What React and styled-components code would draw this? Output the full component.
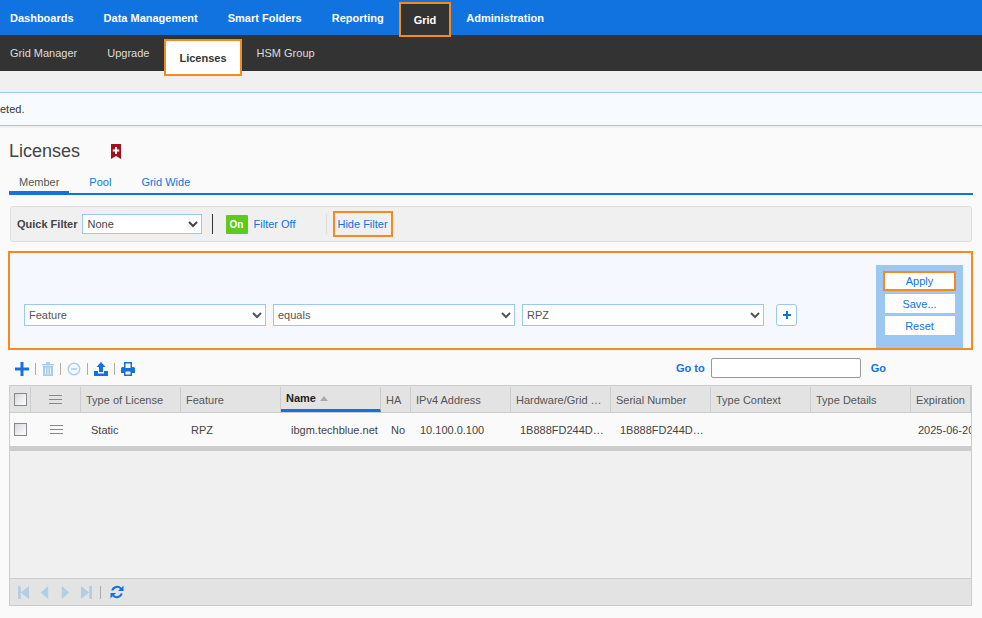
import styled, { createGlobalStyle } from "styled-components";

const GlobalStyle = createGlobalStyle`
  html, body {
    margin: 0;
    padding: 0;
    height: 618px;
    overflow: hidden;
    background: #fafafa;
    font-family: "Liberation Sans", Arial, sans-serif;
    font-size: 11px;
    color: #444;
  }
  * { box-sizing: border-box; }
`;

const topItems = ["Dashboards", "Data Management", "Smart Folders", "Reporting", "Grid", "Administration"];
const subItems = ["Grid Manager", "Upgrade", "Licenses", "HSM Group"];
const columns = ["Type of License", "Feature", "Name", "HA", "IPv4 Address", "Hardware/Grid …", "Serial Number", "Type Context", "Type Details", "Expiration"];
const cells = [
  { text: "Static", pad: 10 },
  { text: "RPZ", pad: 10 },
  { text: "ibgm.techblue.net", pad: 10 },
  { text: "No", pad: 10 },
  { text: "10.100.0.100", pad: 9 },
  { text: "1B888FD244D…", pad: 9 },
  { text: "1B888FD244D…", pad: 9 },
  { text: "", pad: 9 },
  { text: "", pad: 9 },
  { text: "2025-06-20", pad: 7 },
];

const gridCols = "21px 50px 100px 100px 100px 30px 100px 100px 100px 100px 100px 1fr";

function Caret({ dir }) {
  return (
    <PagerSvg viewBox="0 0 12 16">
      {dir === "first" && <path d="M0 1h3v14H0zM3 8l9-7v14z" />}
      {dir === "prev" && <path d="M2 8l8-7v14z" />}
      {dir === "next" && <path d="M10 8L2 1v14z" />}
      {dir === "last" && <path d="M12 1H9v14h3zM9 8L0 1v14z" />}
    </PagerSvg>
  );
}

function App() {
  return (
    <Page>
      <GlobalStyle />
      <TopNav>
        {topItems.map((t) => (
          <TopItem key={t} $active={t === "Grid"}>{t}</TopItem>
        ))}
      </TopNav>
      <SubNav>
        {subItems.map((t) => (
          <SubItem key={t} $active={t === "Licenses"}>{t}</SubItem>
        ))}
      </SubNav>
      <NoticeArea>
        <Notice>eted.</Notice>
      </NoticeArea>

      <Content>
        <TitleRow>
          <Title>Licenses</Title>
          <svg width="10" height="15" viewBox="0 0 10 15">
            <path d="M0 0h10v15l-5-3-5 3z" fill="#a5101f" />
            <path d="M4 3h2v2.5h2.2v2H6V10H4V7.5H1.8v-2H4z" fill="#fff" />
          </svg>
        </TitleRow>
        <Tabs>
          <Tab $active>Member</Tab>
          <Tab>Pool</Tab>
          <Tab>Grid Wide</Tab>
        </Tabs>

        <FilterBar>
          <QuickLabel>Quick Filter</QuickLabel>
          <QuickSelect defaultValue="None">
            <option>None</option>
          </QuickSelect>
          <DarkDivider />
          <OnBadge>On</OnBadge>
          <FilterLink>Filter Off</FilterLink>
          <LightDivider />
          <HideFilter>Hide Filter</HideFilter>
        </FilterBar>

        <FilterPanel>
          <Rule>
            <RuleSelect defaultValue="Feature"><option>Feature</option></RuleSelect>
            <RuleSelect defaultValue="equals"><option>equals</option></RuleSelect>
            <RuleSelect defaultValue="RPZ"><option>RPZ</option></RuleSelect>
            <AddRule>
              <svg width="10" height="10" viewBox="0 0 10 10">
                <path d="M4 1h2v3h3v2H6v3H4V6H1V4h3z" fill="#1173e0" />
              </svg>
            </AddRule>
          </Rule>
          <ActionPanel>
            <ActionButton $focus>Apply</ActionButton>
            <ActionButton>Save...</ActionButton>
            <ActionButton>Reset</ActionButton>
          </ActionPanel>
        </FilterPanel>

        <Toolbar>
          <Tools>
            <svg width="14" height="14" viewBox="0 0 14 14">
              <path d="M5.5 0h3v5.5H14v3H8.500V14h-3V8.500H0v-3h5.500z" fill="#1173e0" />
            </svg>
            <ToolSep />
            <svg width="12" height="14" viewBox="0 0 12 14">
              <path d="M0 2h12v1.500H0zM4 0h4v2H4zM1 4h10v10H1z" fill="#a9cdf0" />
              <path d="M3 5.500h1v7H3zM5.500 5.500h1v7h-1zM8 5.500h1v7H8z" fill="#e6f0fa" />
            </svg>
            <ToolSep />
            <svg width="14" height="14" viewBox="0 0 14 14">
              <circle cx="7" cy="7" r="5.800" fill="none" stroke="#a9cdf0" strokeWidth="1.400" />
              <path d="M4 6.200h6v1.600H4z" fill="#a9cdf0" />
            </svg>
            <ToolSep />
            <svg width="14" height="14" viewBox="0 0 14 14">
              <path d="M7 0l4.500 5H9v5H5V5H2.500z" fill="#1173e0" />
              <path d="M0 9h4v2.500h6V9h4v5H0z" fill="#1173e0" />
            </svg>
            <ToolSep />
            <svg width="14" height="14" viewBox="0 0 14 14">
              <path fillRule="evenodd" d="M3 0h8v5h1.500A1.500 1.500 0 0 1 14 6.500V11h-3v3H3v-3H0V6.500A1.500 1.500 0 0 1 1.500 5H3zM4.500 1.500V6h5V1.500zM4.500 9.500v3h5v-3z" fill="#1173e0" />
            </svg>
          </Tools>
          <GoTo>
            <GoLabel>Go to</GoLabel>
            <GoInput />
            <GoLabel>Go</GoLabel>
          </GoTo>
        </Toolbar>

        <Table>
          <HeadRow>
            <HeadCell $center><Check /></HeadCell>
            <HeadCell $center><Menu /></HeadCell>
            {columns.map((c) => (
              <HeadCell key={c} $sorted={c === "Name"}>
                {c}
                {c === "Name" && (
                  <svg width="8" height="5" viewBox="0 0 8 5">
                    <path d="M4 0l4 5H0z" fill="#aaa" />
                  </svg>
                )}
              </HeadCell>
            ))}
          </HeadRow>
          <BodyRow>
            <BodyCell $center><Check /></BodyCell>
            <BodyCell $center><Menu /></BodyCell>
            {cells.map((c, i) => (
              <BodyCell key={i} $pad={c.pad}>{c.text}</BodyCell>
            ))}
          </BodyRow>
          <HScroll />
          <Empty />
          <Pager>
            <Caret dir="first" />
            <Caret dir="prev" />
            <Caret dir="next" />
            <Caret dir="last" />
            <PagerSep />
            <svg width="16" height="16" viewBox="0 0 16 16">
              <path d="M2.300 6.500A6 6 0 0 1 12.500 3.700L14.500 1.500V7H9l2-2.100A4 4 0 0 0 4.500 6.500z" fill="#1173e0" />
              <path d="M13.700 9.500A6 6 0 0 1 3.500 12.300L1.500 14.500V9H7l-2 2.100A4 4 0 0 0 11.500 9.500z" fill="#1173e0" />
            </svg>
          </Pager>
        </Table>
      </Content>
    </Page>
  );
}

export default App;

const Page = styled.div`
  width: 982px;
  height: 618px;
  overflow: hidden;
  display: flex;
  flex-direction: column;
`;

const TopNav = styled.div`
  display: flex;
  height: 35px;
  background: #1173e0;
`;

const TopItem = styled.div`
  display: flex;
  align-items: center;
  justify-content: center;
  padding: 0 15px;
  height: 35px;
  color: #fff;
  font-weight: bold;
  font-size: 11px;
  &:first-child { padding-left: 10px; }
  ${(p) => p.$active && `
    position: relative;
    background: #333;
    border: 2px solid #f58a1f;
    height: 35px;
    margin: 2px 0 -2px;
    padding: 0 13px;
  `}
`;

const SubNav = styled.div`
  display: flex;
  height: 36px;
  background: #333;
`;

const SubItem = styled.div`
  display: flex;
  align-items: center;
  padding: 0 15px;
  color: #ddd;
  font-size: 11px;
  &:first-child { padding-left: 10px; }
  ${(p) => p.$active && `
    position: relative;
    background: #fff;
    color: #333;
    font-weight: bold;
    border: 2px solid #f58a1f;
    height: 37px;
    margin: 4px 0 -5px;
    padding: 0 13px;
  `}
`;

const NoticeArea = styled.div`
  height: 57px;
  padding-top: 21px;
  background: #f0f0f0;
`;

const Notice = styled.div`
  height: 34px;
  display: flex;
  align-items: center;
  background: #f7fbff;
  border-top: 1px solid #9bc7f2;
  border-bottom: 1px solid #9bc7f2;
  color: #333;
  font-size: 11px;
`;

const Content = styled.div`
  flex: 1;
  padding: 0 9px 0 9px;
  background: #fafafa;
`;

const TitleRow = styled.div`
  display: flex;
  align-items: center;
  gap: 32px;
  height: 46px;
`;

const Title = styled.h1`
  margin: 0;
  font-size: 18px;
  font-weight: normal;
  color: #444;
  width: 70px;
`;

const Tabs = styled.div`
  display: flex;
  height: 21px;
  border-bottom: 2px solid #1173e0;
`;

const Tab = styled.div`
  height: 21px;
  padding: 2px 10px 0;
  margin-right: 10px;
  color: ${(p) => (p.$active ? "#555" : "#1173e0")};
  ${(p) => p.$active && "border-bottom: 4px solid #1173e0;"}
`;

const FilterBar = styled.div`
  display: flex;
  align-items: center;
  height: 36px;
  margin: 11px 0 9px 1px;
  width: 962px;
  padding: 0 6px;
  background: #f0f0f0;
  border: 1px solid #ddd;
  border-radius: 3px;
`;

const QuickLabel = styled.b`
  color: #444;
  margin-right: 4px;
`;

const QuickSelect = styled.select`
  width: 120px;
  height: 20px;
  padding: 0 1px;
  border: 1px solid #9bc7f2;
  border-radius: 0;
  background: #fff;
  color: #444;
  font: 11px "Liberation Sans", Arial, sans-serif;
`;

const DarkDivider = styled.div`
  width: 1px;
  height: 20px;
  margin: 0 13px 0 10px;
  background: #333;
`;

const OnBadge = styled.div`
  width: 22px;
  height: 19px;
  display: flex;
  align-items: center;
  justify-content: center;
  background: #5fc91d;
  color: #fff;
  font-size: 10px;
  font-weight: bold;
  border-radius: 1px;
`;

const FilterLink = styled.div`
  margin-left: 6px;
  width: 72px;
  color: #1173e0;
`;

const LightDivider = styled.div`
  width: 1px;
  height: 20px;
  background: #ddd;
`;

const HideFilter = styled.div`
  display: flex;
  align-items: center;
  justify-content: center;
  height: 26px;
  width: 60px;
  margin-left: 6px;
  border: 2px solid #f58a1f;
  color: #1173e0;
`;

const FilterPanel = styled.div`
  display: flex;
  justify-content: space-between;
  align-items: flex-end;
  width: 965px;
  height: 99px;
  margin-left: -1px;
  padding: 0 8px 0 14px;
  background: #f5f9ff;
  border: 2px solid #f58a1f;
`;

const Rule = styled.div`
  display: flex;
  align-items: center;
  gap: 7px;
  margin-bottom: 22px;
`;

const RuleSelect = styled.select`
  width: 242px;
  height: 22px;
  padding: 0 0;
  border: 1px solid #9bc7f2;
  border-radius: 0;
  background: #fff;
  color: #555;
  font: 11px "Liberation Sans", Arial, sans-serif;
`;

const AddRule = styled.div`
  display: flex;
  align-items: center;
  justify-content: center;
  width: 21px;
  height: 22px;
  margin-left: 5px;
  background: #fff;
  border: 1px solid #9bc7f2;
  border-radius: 3px;
`;

const ActionPanel = styled.div`
  display: flex;
  flex-direction: column;
  align-items: center;
  gap: 3px;
  width: 87px;
  height: 83px;
  padding-top: 6px;
  background: #9bc7f2;
`;

const ActionButton = styled.div`
  display: flex;
  align-items: center;
  justify-content: center;
  width: 70px;
  height: 19px;
  background: #fff;
  color: #1173e0;
  ${(p) => p.$focus && `
    width: 73px;
    height: 20px;
    border: 2px solid #f58a1f;
  `}
`;

const Toolbar = styled.div`
  display: flex;
  justify-content: space-between;
  align-items: center;
  height: 35px;
  padding: 0 87px 0 6px;
`;

const Tools = styled.div`
  display: flex;
  align-items: center;
  gap: 6px;
  margin-top: 2px;
`;

const ToolSep = styled.div`
  width: 1px;
  height: 12px;
  background: #b5aea0;
`;

const GoTo = styled.div`
  display: flex;
  align-items: center;
  gap: 6px;
`;

const GoLabel = styled.b`
  color: #1173e0;
  & + input + & { margin-left: 4px; }
`;

const GoInput = styled.input`
  width: 150px;
  height: 20px;
  border: 1px solid #999;
  border-radius: 2px;
  background: #fff;
`;

const Table = styled.div`
  display: flex;
  flex-direction: column;
  width: 963px;
  height: 221px;
  border: 1px solid #ccc;
  background: #f0f0f0;
`;

const HeadRow = styled.div`
  display: grid;
  grid-template-columns: ${gridCols};
  height: 27px;
  background: #e3e3e3;
  border-bottom: 1px solid #ccc;
  overflow: hidden;
`;

const HeadCell = styled.div`
  display: flex;
  align-items: center;
  gap: 4px;
  justify-content: ${(p) => (p.$center ? "center" : "flex-start")};
  padding-left: ${(p) => (p.$center ? "0" : "5px")};
  margin-top: 1px;
  border-right: 1px solid #ccc;
  white-space: nowrap;
  color: #555;
  ${(p) => p.$sorted && `
    color: #222;
    font-weight: bold;
    border-bottom: 3px solid #1173e0;
  `}
`;

const BodyRow = styled.div`
  display: grid;
  grid-template-columns: ${gridCols};
  height: 33px;
  background: #fafafa;
  overflow: hidden;
`;

const BodyCell = styled.div`
  display: flex;
  align-items: center;
  justify-content: ${(p) => (p.$center ? "center" : "flex-start")};
  padding-left: ${(p) => p.$pad || 0}px;
  white-space: nowrap;
  color: #444;
`;

const Check = styled.span`
  display: block;
  width: 13px;
  height: 13px;
  border: 1px solid #888;
  background: linear-gradient(135deg, #d5d9de, #fff);
`;

const Menu = styled.span`
  display: block;
  width: 13px;
  height: 9px;
  border-top: 1px solid #888;
  border-bottom: 1px solid #888;
  position: relative;
  &::after {
    content: "";
    position: absolute;
    left: 0;
    right: 0;
    top: 3px;
    height: 1px;
    background: #888;
  }
`;

const HScroll = styled.div`
  height: 5px;
  background: #ccc;
`;

const Empty = styled.div`
  flex: 1;
`;

const Pager = styled.div`
  display: flex;
  align-items: center;
  gap: 10px;
  height: 27px;
  padding-left: 8px;
  background: #e3e3e3;
  border-top: 1px solid #ccc;
`;

const PagerSvg = styled.svg`
  width: 11px;
  height: 15px;
  fill: #b3cee0;
`;

const PagerSep = styled.div`
  width: 1px;
  height: 13px;
  margin: 0 -2px;
  background: #aaa;
`;
